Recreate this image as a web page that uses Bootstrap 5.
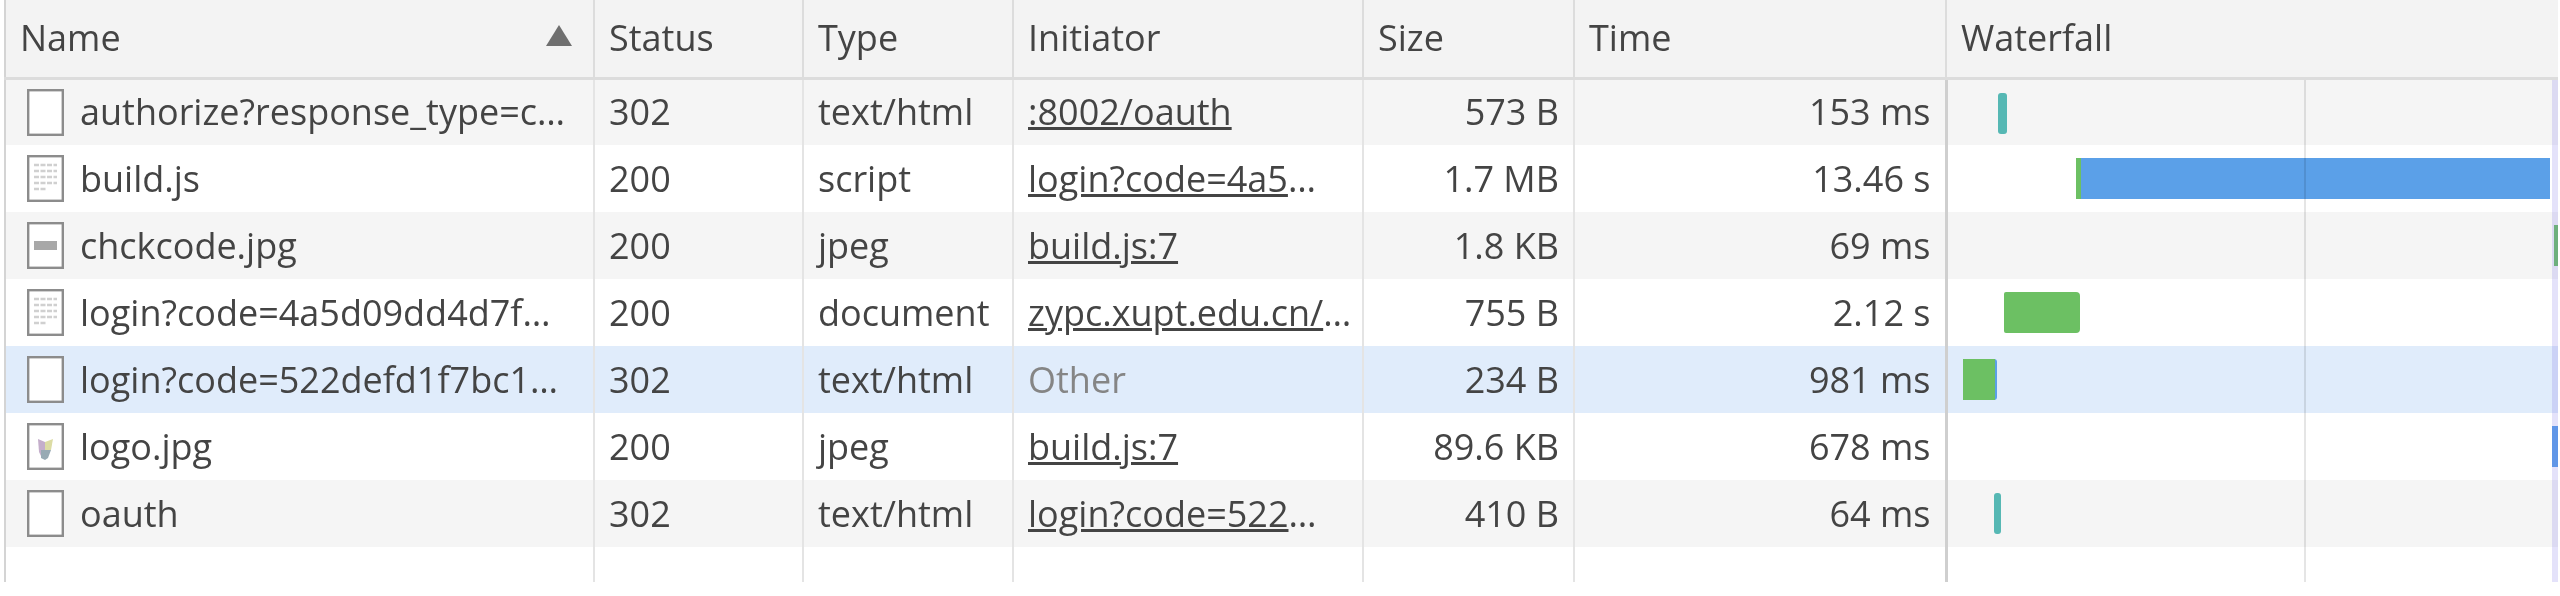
<!DOCTYPE html>
<html lang="en">
<head>
    <meta charset="UTF-8">
    <title>Network</title>
    <link rel="stylesheet" href="https://cdn.jsdelivr.net/npm/bootstrap@5.3.0/dist/css/bootstrap.min.css">
    <style>
        body { background: #fff; overflow: hidden; }
        .net-wrap { padding: 0 2px 0 4px; filter: blur(.7px); }
        .net-grid { table-layout: fixed; width: 100%; margin: 0; border-collapse: collapse; border-left: 2px solid #d4d4d4; font-family: "Open Sans", "Liberation Sans", sans-serif; font-size: 36px; letter-spacing: 0; color: #444; }
        .net-grid th, .net-grid td { padding: 0 14px; white-space: nowrap; overflow: hidden; border: 0; border-right: 2px solid #e4e4e4; font-weight: 400; box-shadow: none; color: #444; vertical-align: middle; }
        .net-grid thead th { height: 78px; background: #f3f3f3; border-bottom: 3px solid #dcdcdc; border-right-color: #dcdcdc; }
        .net-grid tbody td { height: 67px; background: #fff; }
        .net-grid tbody tr.row-grey td { background: #f5f5f5; }
        .net-grid tbody tr.row-picked td { background: #e0ecfb; }
        .net-grid tbody tr.row-rest td { height: 35px; }
        .net-grid a { color: #444; }
        .net-grid .cell-other { color: #858585; }
        .net-grid td.cell-name { padding-left: 21px; }
        .net-grid td.cell-fall, .net-grid th.cell-fall { border-right: 0; }
        .net-grid td.cell-time { border-right: 3px solid #cfcfcf; }
        .net-grid td.cell-fall { position: relative; padding: 0; }
        .net-grid td.cell-fall::before { content: ""; position: absolute; top: 0; bottom: 0; left: 356px; width: 2px; background: rgba(0, 0, 0, .1); z-index: 1; }
        .net-grid td.cell-fall::after { content: ""; position: absolute; top: 0; bottom: 0; right: 0; width: 6px; background: rgba(120, 110, 230, .2); z-index: 1; }
        .file-ico { width: 37px; height: 47px; flex: none; }
        .sort-up { width: 0; height: 0; border-left: 13px solid transparent; border-right: 13px solid transparent; border-bottom: 21px solid #6f6f6f; margin-right: 5px; margin-top: -6px; }
        .fall-bar { position: absolute; top: 13px; height: 41px; }
        .bar-teal { background: #56b8b4; border-radius: 3px; }
        .bar-green { background: #6cc063; }
        .bar-blue { background: #5ba0e8; }
    </style>
</head>
<body>
    <div class="net-wrap">
        <table class="table net-grid">
            <colgroup>
                <col style="width: 589px">
                <col style="width: 209px">
                <col style="width: 210px">
                <col style="width: 350px">
                <col style="width: 211px">
                <col style="width: 372px">
                <col>
            </colgroup>
            <thead>
                <tr>
                    <th class="pe-3"><div class="d-flex justify-content-between align-items-center">Name <span class="sort-up"></span></div></th>
                    <th>Status</th>
                    <th>Type</th>
                    <th>Initiator</th>
                    <th>Size</th>
                    <th>Time</th>
                    <th class="cell-fall">Waterfall</th>
                </tr>
            </thead>
            <tbody>
                <tr class="row-grey">
                    <td class="cell-name"><div class="d-flex align-items-center gap-3"><svg class="file-ico" viewBox="0 0 37 47"><rect x="1.2" y="1.2" width="34.6" height="44.6" fill="#fff" stroke="#8c8c8c" stroke-width="2.4"/></svg><span>authorize?response_type=c…</span></div></td>
                    <td>302</td><td>text/html</td><td><a href="#">:8002/oauth</a></td>
                    <td class="text-end">573 B</td><td class="text-end cell-time">153 ms</td>
                    <td class="cell-fall"><span class="fall-bar bar-teal" style="left: 50px; width: 9px"></span></td>
                </tr>
                <tr>
                    <td class="cell-name"><div class="d-flex align-items-center gap-3"><svg class="file-ico" viewBox="0 0 37 47"><rect x="1.2" y="1.2" width="34.6" height="44.6" fill="#fff" stroke="#8c8c8c" stroke-width="2.4"/><path d="M7 10h23M7 16h23M7 22h23M7 28h23M7 34h13" stroke="#d0d0d0" stroke-width="2.5" stroke-dasharray="5 1.5" fill="none"/></svg><span>build.js</span></div></td>
                    <td>200</td><td>script</td><td><a href="#">login?code=4a5</a>…</td>
                    <td class="text-end">1.7 MB</td><td class="text-end cell-time">13.46 s</td>
                    <td class="cell-fall"><span class="fall-bar bar-green" style="left: 128px; width: 6px"></span><span class="fall-bar bar-blue" style="left: 133px; width: 469px"></span></td>
                </tr>
                <tr class="row-grey">
                    <td class="cell-name"><div class="d-flex align-items-center gap-3"><svg class="file-ico" viewBox="0 0 37 47"><rect x="1.2" y="1.2" width="34.6" height="44.6" fill="#fff" stroke="#8c8c8c" stroke-width="2.4"/><rect x="7" y="19" width="23" height="9" fill="#a8a8a8"/></svg><span>chckcode.jpg</span></div></td>
                    <td>200</td><td>jpeg</td><td><a href="#">build.js:7</a></td>
                    <td class="text-end">1.8 KB</td><td class="text-end cell-time">69 ms</td>
                    <td class="cell-fall"><span class="fall-bar bar-green" style="left: 606px; width: 5px"></span></td>
                </tr>
                <tr>
                    <td class="cell-name"><div class="d-flex align-items-center gap-3"><svg class="file-ico" viewBox="0 0 37 47"><rect x="1.2" y="1.2" width="34.6" height="44.6" fill="#fff" stroke="#8c8c8c" stroke-width="2.4"/><path d="M7 10h23M7 16h23M7 22h23M7 28h23M7 34h13" stroke="#d0d0d0" stroke-width="2.5" stroke-dasharray="5 1.5" fill="none"/></svg><span>login?code=4a5d09dd4d7f…</span></div></td>
                    <td>200</td><td>document</td><td><a href="#">zypc.xupt.edu.cn/</a>…</td>
                    <td class="text-end">755 B</td><td class="text-end cell-time">2.12 s</td>
                    <td class="cell-fall"><span class="fall-bar bar-green" style="left: 56px; width: 76px; border-radius: 2px 4px 4px 2px"></span></td>
                </tr>
                <tr class="row-picked">
                    <td class="cell-name"><div class="d-flex align-items-center gap-3"><svg class="file-ico" viewBox="0 0 37 47"><rect x="1.2" y="1.2" width="34.6" height="44.6" fill="#fff" stroke="#8c8c8c" stroke-width="2.4"/></svg><span>login?code=522defd1f7bc1…</span></div></td>
                    <td>302</td><td>text/html</td><td class="cell-other">Other</td>
                    <td class="text-end">234 B</td><td class="text-end cell-time">981 ms</td>
                    <td class="cell-fall"><span class="fall-bar bar-blue" style="left: 44px; width: 5px; border-radius: 0 3px 3px 0"></span><span class="fall-bar bar-green" style="left: 15px; width: 32px"></span></td>
                </tr>
                <tr>
                    <td class="cell-name"><div class="d-flex align-items-center gap-3"><svg class="file-ico" viewBox="0 0 37 47"><rect x="1.2" y="1.2" width="34.6" height="44.6" fill="#fff" stroke="#8c8c8c" stroke-width="2.4"/><path d="M11 16l7 3 1 17-4-1-3-6z" fill="#c4aecb"/><path d="M18 19l8-3-2 11-6 1z" fill="#dcdca4"/><path d="M14 27l10 0-3 8-3 2-4-2z" fill="#98aab4"/></svg><span>logo.jpg</span></div></td>
                    <td>200</td><td>jpeg</td><td><a href="#">build.js:7</a></td>
                    <td class="text-end">89.6 KB</td><td class="text-end cell-time">678 ms</td>
                    <td class="cell-fall"><span class="fall-bar bar-blue" style="left: 604px; width: 7px"></span></td>
                </tr>
                <tr class="row-grey">
                    <td class="cell-name"><div class="d-flex align-items-center gap-3"><svg class="file-ico" viewBox="0 0 37 47"><rect x="1.2" y="1.2" width="34.6" height="44.6" fill="#fff" stroke="#8c8c8c" stroke-width="2.4"/></svg><span>oauth</span></div></td>
                    <td>302</td><td>text/html</td><td><a href="#">login?code=522</a>…</td>
                    <td class="text-end">410 B</td><td class="text-end cell-time">64 ms</td>
                    <td class="cell-fall"><span class="fall-bar bar-teal" style="left: 46px; width: 7px"></span></td>
                </tr>
                <tr class="row-rest">
                    <td></td><td></td><td></td><td></td><td></td><td class="cell-time"></td><td class="cell-fall"></td>
                </tr>
            </tbody>
        </table>
    </div>
    <script src="https://cdn.jsdelivr.net/npm/bootstrap@5.3.0/dist/js/bootstrap.bundle.min.js"></script>
</body>
</html>
